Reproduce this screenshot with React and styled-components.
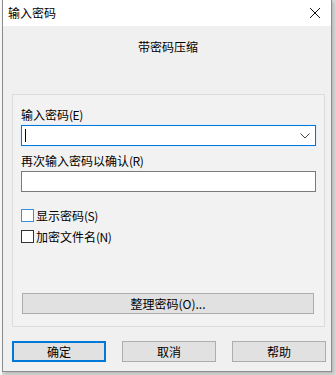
import React from "react";
import styled, { createGlobalStyle } from "styled-components";

const GlobalStyle = createGlobalStyle`
	html, body {
		margin: 0;
		padding: 0;
		background: #e4e4e4;
		font-family: "Noto Sans CJK SC", "Noto Sans", sans-serif;
		font-size: 12px;
		color: #000;
	}
`;

const Screen = styled.div`
	width: 336px;
	height: 375px;
	display: flex;
	background: linear-gradient(to right, #f7f7f7 0 2px, #dadada 2px);
	overflow: hidden;
`;

const Window = styled.div`
	margin-left: 2px;
	width: 330px;
	height: 372px;
	box-sizing: border-box;
	border: 1px solid #8c8c8c;
	border-top: none;
	background: #f0f0f0;
	display: flex;
	flex-direction: column;
	box-shadow: 2px 2px 3px rgba(0, 0, 0, 0.15);
`;

const TitleBar = styled.div`
	height: 26px;
	background: #fff;
	display: flex;
	align-items: center;
	justify-content: space-between;
	padding: 0 8px 0 5px;
	flex-shrink: 0;
`;

const Title = styled.span`
	font-size: 12px;
	line-height: 16px;
`;

const Close = styled.svg`
	width: 12px;
	height: 12px;
	margin-right: 2px;
`;

const Heading = styled.div`
	text-align: center;
	font-size: 12px;
	line-height: 16px;
	margin-top: 13px;
	margin-left: 2px;
`;

const Group = styled.div`
	margin: 39px 0 0 9px;
	width: 313px;
	height: 233px;
	box-sizing: border-box;
	border: 1px solid #dcdcdc;
	background: #f2f2f2;
	padding: 12px 8px 0 8px;
	display: flex;
	flex-direction: column;
`;

const Label = styled.div`
	font-size: 12px;
	line-height: 16px;
	margin-bottom: 2px;
	margin-top: ${(p) => p.$top || 0}px;
`;

const Combo = styled.div`
	height: 21px;
	width: 295px;
	box-sizing: border-box;
	border: 1px solid #0078d7;
	background: #fff;
	box-shadow: 0 0 0 1px #e3effa;
	display: flex;
	align-items: center;
	justify-content: space-between;
	padding: 0 5px 0 3px;
`;

const Caret = styled.span`
	width: 1px;
	height: 13px;
	background: #000;
`;

const Chevron = styled.svg`
	width: 10px;
	height: 6px;
`;

const TextBox = styled.div`
	height: 21px;
	width: 295px;
	box-sizing: border-box;
	border: 1px solid #7a7a7a;
	background: #fff;
`;

const Check = styled.label`
	display: flex;
	align-items: center;
	gap: 2px;
	height: 16px;
	margin-top: ${(p) => p.$top}px;
	font-size: 12px;
`;

const Box = styled.span`
	width: 13px;
	height: 13px;
	box-sizing: border-box;
	border: 1px solid ${(p) => (p.$hover ? "#3b8fd6" : "#333")};
	background: #fff;
`;

const Key = styled.span`
	letter-spacing: -0.5px;
`;

const Button = styled.div`
	height: 21px;
	box-sizing: border-box;
	border: ${(p) => (p.$primary ? "2px solid #0078d7" : "1px solid #adadad")};
	background: #e1e1e1;
	display: flex;
	align-items: center;
	justify-content: center;
	font-size: 12px;
	width: ${(p) => p.$w}px;
`;

const WideButton = styled(Button)`
	margin-top: 49px;
	margin-left: 1px;
`;

const Footer = styled.div`
	display: flex;
	gap: 16px;
	margin: 14px 0 0 9px;
`;

export default function App() {
	return (
		<>
			<GlobalStyle />
			<Screen>
				<Window>
					<TitleBar>
						<Title>输入密码</Title>
						<Close viewBox="0 0 12 12">
							<path d="M1 1 L11 11 M11 1 L1 11" stroke="#111" strokeWidth="1" fill="none" />
						</Close>
					</TitleBar>
					<Heading>带密码压缩</Heading>
					<Group>
						<Label>输入密码<Key>(E)</Key></Label>
						<Combo>
							<Caret />
							<Chevron viewBox="0 0 10 6">
								<path d="M0.5 0.5 L5 5 L9.5 0.5" stroke="#444" strokeWidth="1" fill="none" />
							</Chevron>
						</Combo>
						<Label $top={7}>再次输入密码以确认<Key>(R)</Key></Label>
						<TextBox />
						<Check $top={15}>
							<Box $hover />
							<span>显示密码<Key>(S)</Key></span>
						</Check>
						<Check $top={5}>
							<Box />
							<span>加密文件名<Key>(N)</Key></span>
						</Check>
						<WideButton $w={292}>整理密码(O)...</WideButton>
					</Group>
					<Footer>
						<Button $primary $w={94}>确定</Button>
						<Button $w={94}>取消</Button>
						<Button $w={94}>帮助</Button>
					</Footer>
				</Window>
			</Screen>
		</>
	);
}
